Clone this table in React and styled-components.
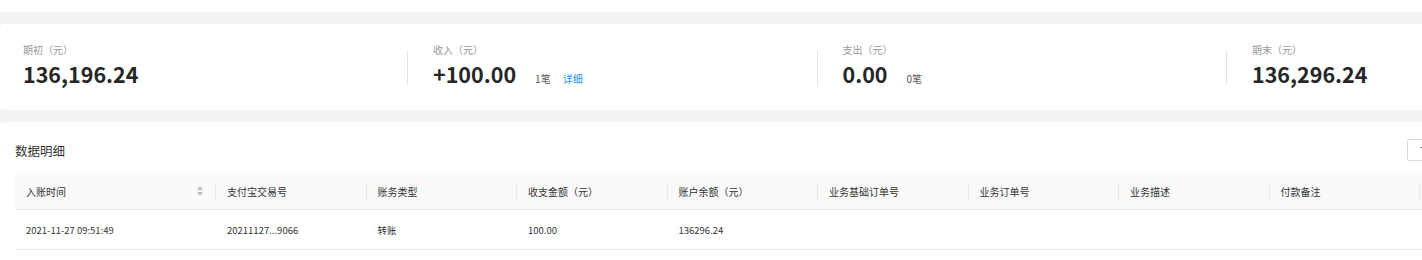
import React from "react";
import styled, { createGlobalStyle } from "styled-components";

const GlobalStyle = createGlobalStyle`
  html, body {
    margin: 0;
    padding: 0;
    background: #f3f3f3;
    overflow: hidden;
  }
  body {
    font-family: "Noto Sans CJK SC", "Noto Sans", sans-serif;
    color: #333;
  }
`;

const Page = styled.div`
  width: 1638px;
  display: flex;
  flex-direction: column;
  gap: 12px;
`;

const TopCard = styled.div`
  height: 12px;
  background: #fff;
  border-radius: 0 0 4px 4px;
`;

const StatsCard = styled.div`
  background: #fff;
  border-radius: 4px;
  padding: 19px 0 21px;
  display: grid;
  grid-template-columns: 407px repeat(3, 409.5px);
`;

const StatItem = styled.div`
  display: flex;
  align-items: flex-start;
`;

const Divider = styled.div`
  width: 1px;
  height: 35px;
  margin-top: 7px;
  background: #e3e3e3;
`;

const StatBody = styled.div`
  padding-left: ${(p) => (p.$first ? "23px" : "25px")};
`;

const StatLabel = styled.div`
  font-size: 10px;
  line-height: 14px;
  color: #999;
`;

const StatLine = styled.div`
  display: flex;
  align-items: baseline;
  margin-top: 2px;
`;

const StatValue = styled.div`
  font-size: 21.5px;
  line-height: 30px;
  font-weight: 700;
  color: #262626;
`;

const StatCount = styled.span`
  margin-left: 19px;
  font-size: 10px;
  color: #555;
`;

const DetailLink = styled.a`
  margin-left: 12px;
  font-size: 10px;
  color: #1890ff;
  text-decoration: none;
  cursor: pointer;
`;

const TableCard = styled.div`
  background: #fff;
  border-radius: 4px;
  padding: 17px 15px 20px;
`;

const Toolbar = styled.div`
  height: 22px;
  display: flex;
  align-items: center;
  justify-content: space-between;
  margin-bottom: 12px;
`;

const Title = styled.div`
  font-size: 12.5px;
  color: #333;
`;

const ButtonGroup = styled.div`
  display: flex;
  gap: 9px;
`;

const Button = styled.button`
  height: 22px;
  padding: 0 12px;
  border: 1px solid #d9d9d9;
  border-radius: 2px;
  background: #fff;
  font-family: inherit;
  font-size: 10px;
  color: #333;
  white-space: nowrap;
`;

const columns = "201px repeat(8, 150.5px) 1fr";

const HeadRow = styled.div`
  display: grid;
  grid-template-columns: ${columns};
  height: 36px;
  background: #fafafa;
  border-bottom: 1px solid #e8e8e8;
`;

const HeadCell = styled.div`
  display: flex;
  align-items: center;
  padding-left: 11px;
  font-size: 10px;
  color: #333;
  white-space: nowrap;
`;

const HeadText = styled.span`
  flex: 1;
`;

const Sep = styled.span`
  width: 1px;
  height: 16px;
  background: #e8e8e8;
`;

const SortIcon = styled.svg`
  width: 6px;
  height: 10px;
  margin-right: 12px;
`;

const BodyRow = styled.div`
  display: grid;
  grid-template-columns: ${columns};
  height: 39px;
  border-bottom: 1px solid #e8e8e8;
`;

const BodyCell = styled.div`
  display: flex;
  align-items: center;
  padding-left: 11px;
  font-size: 9.5px;
  color: #333;
  white-space: nowrap;
`;

const stats = [
  { label: "期初（元）", value: "136,196.24" },
  { label: "收入（元）", value: "+100.00", count: "1笔", detail: true },
  { label: "支出（元）", value: "0.00", count: "0笔" },
  { label: "期末（元）", value: "136,296.24" },
];

const heads = [
  "入账时间",
  "支付宝交易号",
  "账务类型",
  "收支金额（元）",
  "账户余额（元）",
  "业务基础订单号",
  "业务订单号",
  "业务描述",
  "付款备注",
  "操作",
];

const rows = [
  ["2021-11-27 09:51:49", "20211127...9066", "转账", "100.00", "136296.24", "", "", "", "", ""],
];

const Sorter = () => (
  <SortIcon viewBox="0 0 6 10">
    <path d="M3 0 L6 4 L0 4 Z" fill="#bfbfbf" />
    <path d="M0 6 L6 6 L3 10 Z" fill="#bfbfbf" />
  </SortIcon>
);

const App = () => {
  return (
    <Page>
      <GlobalStyle />
      <TopCard />
      <StatsCard>
        {stats.map((s, i) => (
          <StatItem key={s.label}>
            {i > 0 && <Divider />}
            <StatBody $first={i === 0}>
              <StatLabel>{s.label}</StatLabel>
              <StatLine>
                <StatValue>{s.value}</StatValue>
                {s.count && <StatCount>{s.count}</StatCount>}
                {s.detail && <DetailLink>详细</DetailLink>}
              </StatLine>
            </StatBody>
          </StatItem>
        ))}
      </StatsCard>
      <TableCard>
        <Toolbar>
          <Title>数据明细</Title>
          <ButtonGroup>
            <Button>下载明细</Button>
            <Button>导出对账单</Button>
            <Button>列设置</Button>
          </ButtonGroup>
        </Toolbar>
        <HeadRow>
          {heads.map((h, i) => (
            <HeadCell key={h}>
              <HeadText>{h}</HeadText>
              {i === 0 && <Sorter />}
              {i < heads.length - 1 && <Sep />}
            </HeadCell>
          ))}
        </HeadRow>
        {rows.map((r, ri) => (
          <BodyRow key={ri}>
            {r.map((c, ci) => (
              <BodyCell key={ci}>{c}</BodyCell>
            ))}
          </BodyRow>
        ))}
      </TableCard>
    </Page>
  );
};

export default App;
